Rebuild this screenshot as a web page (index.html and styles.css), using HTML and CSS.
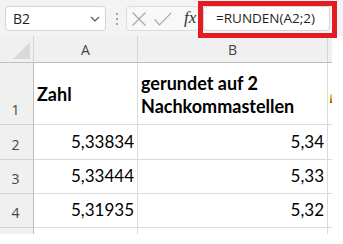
FILE: index.html
```html
<!DOCTYPE html>
<html lang="de">
<head>
<meta charset="utf-8">
<title>RUNDEN</title>
<link rel="stylesheet" href="styles.css">
</head>
<body>
<div class="toolbar">
  <div class="namebox">
    <span>B2</span>
    <svg class="chev" width="10" height="6" viewBox="0 0 10 6"><path d="M1 1 L5 5 L9 1" fill="none" stroke="#555" stroke-width="1.2"/></svg>
  </div>
  <div class="dots"><i></i><i></i><i></i></div>
  <div class="actions">
    <svg width="14" height="14" viewBox="0 0 14 14"><path d="M0.5 0.5 L13.5 13.5 M13.5 0.5 L0.5 13.5" stroke="#a8a8a8" stroke-width="1.2" fill="none"/></svg>
    <svg class="check" width="18" height="14" viewBox="0 0 18 14"><path d="M0.8 7.5 L5.5 12.8 L17.2 0.8" stroke="#a8a8a8" stroke-width="1.2" fill="none"/></svg>
    <span class="fx">fx</span>
  </div>
  <div class="formula">=RUNDEN(A2;2)</div>
  <div class="highlight"></div>
</div>
<div class="sheet">
  <div class="corner"><svg width="17" height="17" viewBox="0 0 17 17"><path d="M17 0 L17 17 L0 17 Z" fill="#d9d9d9"/></svg></div>
  <div class="colhdr">A</div>
  <div class="colhdr">B</div>
  <div class="colhdr last"></div>

  <div class="rowhdr">1</div>
  <div class="cell head">Zahl</div>
  <div class="cell head wrap">gerundet auf 2<br>Nachkommastellen</div>
  <div class="cell last"><span class="clip"></span></div>

  <div class="rowhdr">2</div>
  <div class="cell num">5,33834</div>
  <div class="cell num">5,34</div>
  <div class="cell last"></div>

  <div class="rowhdr">3</div>
  <div class="cell num">5,33444</div>
  <div class="cell num">5,33</div>
  <div class="cell last"></div>

  <div class="rowhdr">4</div>
  <div class="cell num">5,31935</div>
  <div class="cell num">5,32</div>
  <div class="cell last"></div>

  <div class="rowhdr partial"></div>
  <div class="cell partial"></div>
  <div class="cell partial"></div>
  <div class="cell partial last"></div>
</div>
</body>
</html>
```
FILE: styles.css
```css
* { box-sizing: border-box; }
html, body { margin: 0; padding: 0; background: #fff; }
body {
  width: 343px;
  height: 244px;
  overflow: hidden;
  font-family: "Open Sans", "Noto Sans", sans-serif;
}

/* formula bar */
.toolbar {
  position: relative;
  height: 36px;
  background: #f3f3f3;
  display: flex;
  align-items: flex-start;
  padding: 6px 0 0 5px;
}
.namebox {
  width: 101px;
  height: 25px;
  background: #fff;
  border: 1px solid #d4d4d4;
  border-radius: 4px;
  display: flex;
  align-items: center;
  justify-content: space-between;
  padding: 0 5px 0 7px;
  font-size: 14px;
  color: #1f1f1f;
}
.chev { margin-top: 1px; }
.dots {
  display: flex;
  flex-direction: column;
  gap: 3px;
  margin: 7px 0 0 10px;
  width: 2px;
}
.dots i {
  display: block;
  width: 2px;
  height: 2px;
  background: #8a8a8a;
  border-radius: 1px;
}
.actions {
  width: 73px;
  height: 25px;
  margin-left: 8px;
  border: 1px solid #dcdcdc;
  border-radius: 4px;
  background: #f8f8f8;
  display: flex;
  align-items: center;
  padding-left: 5px;
}
.check { margin-left: 8px; }
.fx {
  font-family: "Liberation Serif", serif;
  font-style: italic;
  font-size: 17px;
  color: #333;
  margin-left: 12px;
  margin-top: -2px;
}
.formula {
  width: 127px;
  height: 25px;
  margin-left: 4px;
  background: #fff;
  border: 1px solid #d4d4d4;
  border-radius: 4px;
  padding-left: 12px;
  font-size: 13.5px;
  line-height: 23px;
  color: #1f1f1f;
}
.highlight {
  position: absolute;
  left: 198px;
  top: 1px;
  width: 139px;
  height: 37px;
  border: 5px solid #e31b23;
  z-index: 2;
}

/* grid */
.sheet {
  display: grid;
  grid-template-columns: 34px 104px 190px 4px;
  grid-template-rows: 27px 62px 35px 34px 34px 6px;
  width: 332px;
}
.corner {
  background: #f0f0f0;
  border-right: 1px solid #d4d4d4;
  border-bottom: 1px solid #bdbdbd;
  display: flex;
  align-items: flex-end;
  justify-content: flex-end;
  padding: 0 3px 3px 0;
}
.corner svg { display: block; }
.colhdr {
  background: #f0f0f0;
  border-right: 1px solid #d4d4d4;
  border-bottom: 1px solid #bdbdbd;
  font-size: 14px;
  color: #444;
  text-align: center;
  line-height: 26px;
  padding-top: 1px;
}
.colhdr.last { border-right: 0; }
.rowhdr {
  background: #f0f0f0;
  border-right: 1px solid #bdbdbd;
  border-bottom: 1px solid #d4d4d4;
  font-size: 14px;
  color: #444;
  display: flex;
  align-items: flex-end;
  justify-content: center;
  padding: 0 2px 4px 0;
  line-height: 20px;
}
.rowhdr.partial { border-bottom: 0; }
.cell {
  border-right: 1px solid #dadada;
  border-bottom: 1px solid #dadada;
  font-family: "Lato", "Open Sans", sans-serif;
  font-size: 17px;
  color: #000;
  white-space: nowrap;
  overflow: hidden;
}
.cell.last { border-right: 0; }
.cell.partial { border-bottom: 0; }
.head {
  font-weight: bold;
  font-size: 18px;
  display: flex;
  align-items: center;
  padding: 2px 0 0 3px;
  line-height: 23px;
}
.num {
  text-align: right;
  display: flex;
  align-items: flex-end;
  justify-content: flex-end;
  padding: 0 3px 7px 0;
  line-height: 20px;
}
.clip {
  display: block;
  width: 2px;
  height: 9px;
  margin: 31px 0 0 2px;
  background: linear-gradient(#f6d56a, #e8a33a 50%, #8a4b0c);
}
```
